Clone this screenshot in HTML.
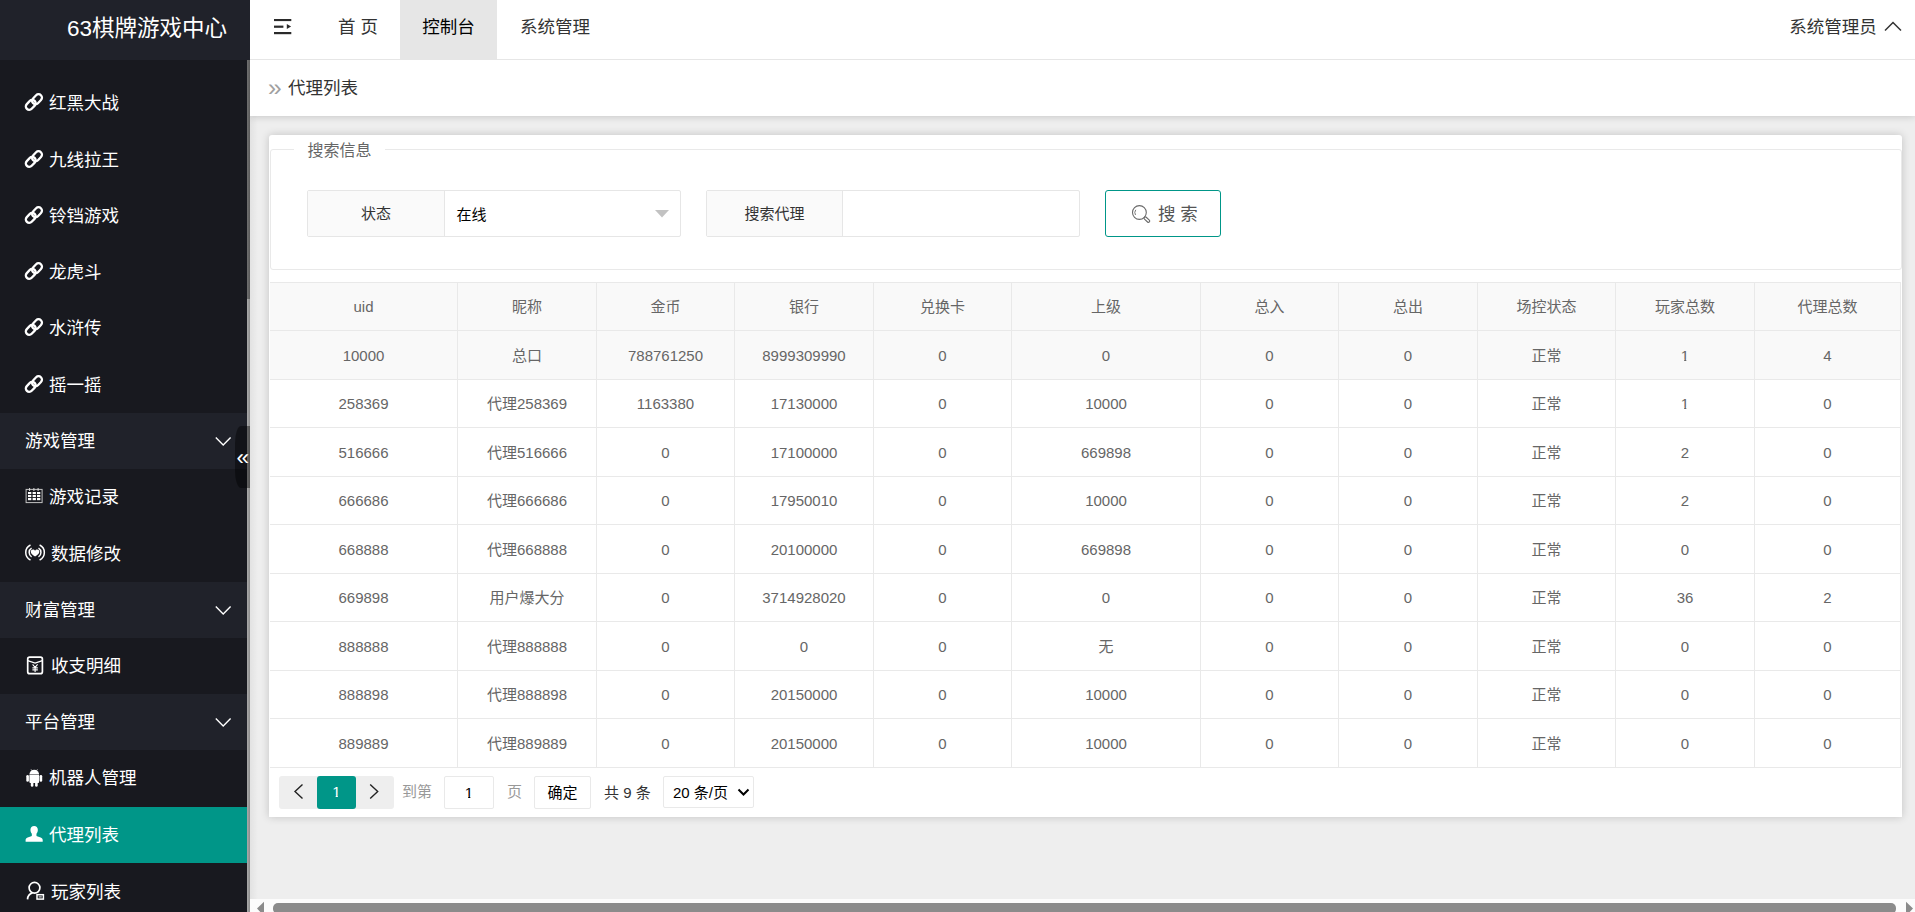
<!DOCTYPE html>
<html lang="zh-CN">
<head>
<meta charset="utf-8">
<title>63棋牌游戏中心</title>
<style>
*{box-sizing:border-box;margin:0;padding:0}
html,body{width:1915px;height:912px;overflow:hidden;background:#eee}
body{font-family:"Liberation Sans","Noto Sans CJK SC",sans-serif;font-size:17.5px;color:#333;position:relative}
#side{z-index:5;position:absolute;left:0;top:0;width:250px;height:912px;background:#18191f;overflow:hidden}
#logo{position:absolute;left:0;top:0;width:250px;height:60px;background:#20222a;color:#fff;font-size:22.5px;line-height:60px;white-space:nowrap}
#logo span{position:absolute;left:67px;top:-1px}
.mi{position:absolute;left:0;width:247px;height:56px;color:#fff;font-size:17.5px;line-height:58px;white-space:nowrap}
.mi .t{position:absolute;left:49px;top:0}
.mi svg{position:absolute;left:0;top:0;width:60px;height:56px}
.grp{background:#20222a}
.lo{line-height:56px !important}
.grp .t{left:25px}
.mi.grp svg.chev{position:absolute;left:214.500px;top:23.500px;width:17px;height:10px}
.act{background:#009688}
#sbar{position:absolute;left:247px;top:60px;width:3px;height:852px;background:linear-gradient(90deg,#aaa,#8c8c8c)}
#sbar i{position:absolute;left:0;top:0;width:3px;height:239px;background:linear-gradient(90deg,#707070,#5a5a5a)}
#handle{position:absolute;left:235px;top:426px;width:15px;height:62px;background:rgba(0,0,0,.42);border-radius:6px 0 0 6px/17px 0 0 17px}
#handle span{position:absolute;left:1.500px;top:0;color:#fff;font-size:22.500px;line-height:63px}
#head{z-index:4;position:absolute;left:250px;top:0;width:1665px;height:60px;background:#fff;border-bottom:1px solid #e6e6e6}
.tab{position:absolute;top:0;height:59px;line-height:55px;font-size:17.5px;color:#333;white-space:nowrap;text-align:center}
#crumb{z-index:3;position:absolute;left:250px;top:60px;width:1665px;height:56px;background:#fff;box-shadow:0 0 8px rgba(0,0,0,.2)}
#crumb .t{position:absolute;left:38px;top:0;line-height:57px;font-size:17.5px;color:#333}
#crumb .g{position:absolute;left:18px;top:0;line-height:56px;font-size:24.5px;color:#a0a0a0}
#card{position:absolute;left:269px;top:135px;width:1633px;height:682px;background:#fff;border-radius:3px 3px 0 0;box-shadow:0 0 8px rgba(0,0,0,.19)}
#fs{position:absolute;left:1px;top:14px;width:1632px;height:121px;border:1px solid #e9e9e9;border-radius:3px}
#lg{position:absolute;left:23px;top:-11.500px;width:91px;height:24px;background:#fff;font-size:16px;line-height:24px;color:#666;text-align:center}
.pane{position:absolute;top:55px;height:47px;border:1px solid #e6e6e6;border-radius:2px;background:#fff}
.pane .lab{position:absolute;left:0;top:0;height:45px;background:#fafafa;border-right:1px solid #e6e6e6;font-size:15px;line-height:45px;text-align:center;color:#333}
.pane .val{position:absolute;top:0;height:45px;font-size:15px;line-height:47px;color:#000}
#btn{position:absolute;left:836px;top:55px;width:116px;height:47px;border:1px solid #009688;border-radius:3px;background:#fff;color:#555;font-size:17.5px;line-height:45px}
#tbl{position:absolute;left:1px;top:147px;width:1631px;height:486px;border-top:1px solid #e9e9e9}
.row{position:absolute;left:0;width:1631px;border-bottom:1px solid #e9e9e9;font-size:15px;color:#666}
.row.hd{background:#f9f9f9}
.row.r1{background:#f9f9f9}
.c{position:absolute;top:0;height:100%;text-align:center;border-right:1px solid #e9e9e9;white-space:nowrap}
.c:last-child{}
.n1{font-weight:400;display:inline-block;line-height:1em;clip-path:polygon(0 0,100% 0,100% 76%,66% 76%,66% 100%,40% 100%,40% 76%,0 76%)}
#pg{position:absolute;left:0;top:641px;font-size:15px;height:33px;line-height:33px;width:800px}
#pg>*{position:absolute;top:0;height:33px;white-space:nowrap}
#ls{position:absolute;left:250px;top:116px;width:8px;height:783px;background:linear-gradient(90deg,rgba(0,0,0,.05),rgba(0,0,0,0));z-index:2}
#hs{z-index:3;position:absolute;left:250px;top:899px;width:1665px;height:13px;background:#fcfcfc;overflow:hidden}
#hs .th{position:absolute;left:23px;top:4px;width:1623px;height:11px;border-radius:5px;background:#8b8b8b}
</style>
</head>
<body>
<div id="side">
<div id="logo"><span>63棋牌游戏中心</span></div>
<div class="mi " style="top:74px"><svg viewBox="0 0 60 56"><g transform="translate(33.9 28.05) rotate(-46)" fill="none" stroke="#fff" stroke-width="2.300"><rect x="-9.800" y="-3.700" width="11.200" height="6.800" rx="3.400"/><rect x="-1.400" y="-3.100" width="11.200" height="6.800" rx="3.400"/></g></svg><span class="t">红黑大战</span></div>
<div class="mi " style="top:131px"><svg viewBox="0 0 60 56"><g transform="translate(33.9 28.05) rotate(-46)" fill="none" stroke="#fff" stroke-width="2.300"><rect x="-9.800" y="-3.700" width="11.200" height="6.800" rx="3.400"/><rect x="-1.400" y="-3.100" width="11.200" height="6.800" rx="3.400"/></g></svg><span class="t">九线拉王</span></div>
<div class="mi " style="top:187px"><svg viewBox="0 0 60 56"><g transform="translate(33.9 28.05) rotate(-46)" fill="none" stroke="#fff" stroke-width="2.300"><rect x="-9.800" y="-3.700" width="11.200" height="6.800" rx="3.400"/><rect x="-1.400" y="-3.100" width="11.200" height="6.800" rx="3.400"/></g></svg><span class="t">铃铛游戏</span></div>
<div class="mi " style="top:243px"><svg viewBox="0 0 60 56"><g transform="translate(33.9 28.05) rotate(-46)" fill="none" stroke="#fff" stroke-width="2.300"><rect x="-9.800" y="-3.700" width="11.200" height="6.800" rx="3.400"/><rect x="-1.400" y="-3.100" width="11.200" height="6.800" rx="3.400"/></g></svg><span class="t">龙虎斗</span></div>
<div class="mi " style="top:299px"><svg viewBox="0 0 60 56"><g transform="translate(33.9 28.05) rotate(-46)" fill="none" stroke="#fff" stroke-width="2.300"><rect x="-9.800" y="-3.700" width="11.200" height="6.800" rx="3.400"/><rect x="-1.400" y="-3.100" width="11.200" height="6.800" rx="3.400"/></g></svg><span class="t">水浒传</span></div>
<div class="mi " style="top:356px"><svg viewBox="0 0 60 56"><g transform="translate(33.9 28.05) rotate(-46)" fill="none" stroke="#fff" stroke-width="2.300"><rect x="-9.800" y="-3.700" width="11.200" height="6.800" rx="3.400"/><rect x="-1.400" y="-3.100" width="11.200" height="6.800" rx="3.400"/></g></svg><span class="t">摇一摇</span></div>
<div class="mi grp lo" style="top:413px"><span class="t">游戏管理</span><svg class="chev" viewBox="0 0 17 10"><path d="M.8 .6l7.400 7.300L15.600 .6" fill="none" stroke="#fff" stroke-width="1.400"/></svg></div>
<div class="mi lo" style="top:469px"><svg style="top:-1px" viewBox="0 0 60 56"><rect x="26.100" y="21.400" width="16" height="13.200" fill="none" stroke="#c4c4c4" stroke-width="1"/><path d="M29.600 20v3M33.900 20v3M38.100 20v3" stroke="#ddd" stroke-width="1"/><g fill="#fff"><rect x="28" y="24" width="3.300" height="2.100"/><rect x="32.600" y="24" width="3.300" height="2.100"/><rect x="37" y="24" width="3.300" height="2.100"/><rect x="28" y="27" width="3.300" height="2.100"/><rect x="32.600" y="27" width="3.300" height="2.100"/><rect x="37" y="27" width="3.300" height="2.100"/><rect x="28" y="30" width="3.300" height="2.200"/><rect x="32.600" y="30" width="3.300" height="2.200"/><rect x="37" y="30" width="3.300" height="2.200"/></g></svg><span class="t">游戏记录</span></div>
<div class="mi lo" style="top:526px"><svg style="top:-1px" viewBox="0 0 60 56"><path d="M35.050 31.600c-3-2.100-4.250-3.300-4.250-4.900 0-1.300 1-2.200 2.150-2.200.9 0 1.700.5 2.100 1.300.4-.8 1.200-1.300 2.100-1.300 1.150 0 2.150.9 2.150 2.200 0 1.600-1.250 2.800-4.250 4.900z" fill="#fff"/><g fill="none" stroke="#fff" stroke-width="1.500"><path d="M31.600 23.200a5 5 0 0 0 0 8.600M38.500 23.200a5 5 0 0 1 0 8.600M30.500 20a8.300 8.300 0 0 0 0 15M39.600 20a8.300 8.300 0 0 1 0 15"/></g></svg><span class="t" style="left:51px">数据修改</span></div>
<div class="mi grp lo" style="top:582px"><span class="t">财富管理</span><svg class="chev" viewBox="0 0 17 10"><path d="M.8 .6l7.400 7.300L15.600 .6" fill="none" stroke="#fff" stroke-width="1.400"/></svg></div>
<div class="mi lo" style="top:638px"><svg style="top:-1px" viewBox="0 0 60 56"><g fill="none" stroke="#fff"><rect x="27.700" y="20.200" width="14.700" height="16.500" rx="2" stroke-width="1.700"/><path d="M27.700 23.700l7.400 2.400 7.300-2.400" stroke-width="1.400"/><path d="M32.600 27.300l2.500 3 2.500-3M35.100 30.300v4.600M32.400 30.900h5.400M32.400 32.900h5.400" stroke-width="1.100"/></g></svg><span class="t" style="left:51px">收支明细</span></div>
<div class="mi grp lo" style="top:694px"><span class="t">平台管理</span><svg class="chev" viewBox="0 0 17 10"><path d="M.8 .6l7.400 7.300L15.600 .6" fill="none" stroke="#fff" stroke-width="1.400"/></svg></div>
<div class="mi lo" style="top:750px"><svg style="top:-1px" viewBox="0 0 60 56"><g fill="#fff"><path d="M29.400 25.900h9.700v7.100a1 1 0 0 1-1 1h-7.700a1 1 0 0 1-1-1z"/><path d="M29.400 25.500a4.850 4.700 0 0 1 9.700 0z"/><rect x="26.300" y="26" width="2.600" height="6.700" rx="1.300"/><rect x="39.600" y="26" width="2.600" height="6.700" rx="1.300"/><rect x="30.800" y="32" width="2.600" height="5.700" rx="1.300"/><rect x="35.100" y="32" width="2.600" height="5.700" rx="1.300"/></g><path d="M31 20.200l1 1.800M37.500 20.200l-1 1.800" stroke="#fff" stroke-width=".6"/></svg><span class="t">机器人管理</span></div>
<div class="mi act lo" style="top:807px"><svg style="top:-1px" viewBox="0 0 60 56"><path d="M34.150 19.900c2.200 0 3.700 1.600 3.700 3.900 0 1.600-.6 3.100-1.400 4v1.700c0 .4.200.6.600.8l3.600 1.300c1.300.5 2.050 1.300 2.050 2.500v1.700H25.600v-1.700c0-1.200.75-2 2.050-2.500l3.600-1.300c.4-.2.600-.4.600-.8v-1.700c-.8-.9-1.400-2.400-1.400-4 0-2.300 1.500-3.900 3.700-3.900z" fill="#fff"/></svg><span class="t">代理列表</span></div>
<div class="mi " style="top:863px"><svg viewBox="0 0 60 56"><g fill="none" stroke="#fff" stroke-width="1.700"><circle cx="34.500" cy="24.800" r="5.400"/><path d="M27.500 36.300c.3-3.300 2.200-5.600 5-6.400"/><rect x="37" y="31.700" width="6.400" height="4.400" stroke-width="1.500"/></g><rect x="38.600" y="33.200" width="3.200" height="1.400" fill="#bbb"/></svg><span class="t" style="left:51px">玩家列表</span></div>
<div id="sbar"><i></i></div>
<div id="handle"><span>«</span></div>
</div>
<div id="head">
<svg style="position:absolute;left:0;top:0;width:60px;height:59px" viewBox="0 0 60 59"><g fill="#2a2a2a"><rect x="24" y="19" width="17.300" height="2.100"/><rect x="24" y="25.600" width="9.400" height="2.200"/><rect x="24" y="32" width="17.300" height="2.200"/><path d="M36.800 24v5l4.300-2.500z"/></g></svg>
<div class="tab" style="left:66px;width:84px">首 页</div>
<div class="tab" style="left:150px;width:97px;background:#e6e6e6;color:#000">控制台</div>
<div class="tab" style="left:247px;width:116px">系统管理</div>
<div class="tab" style="left:1539px;width:88px">系统管理员</div>
<svg style="position:absolute;left:1634px;top:21px;width:18px;height:11px" viewBox="0 0 18 11"><path d="M1 9.500l8-8 8 8" fill="none" stroke="#333" stroke-width="1.500"/></svg>
</div>
<div id="crumb"><span class="g">»</span><span class="t">代理列表</span></div>
<div id="ls"></div>
<div id="card">
<div id="fs"><div id="lg">搜索信息</div></div>
<div class="pane" style="left:38px;width:374px"><div class="lab" style="width:137px">状态</div><div class="val" style="left:148.500px">在线</div><svg style="position:absolute;left:347px;top:19px;width:14px;height:8px" viewBox="0 0 14 8"><path d="M0 0h14L7 7.500z" fill="#c2c2c2"/></svg></div>
<div class="pane" style="left:437px;width:374px"><div class="lab" style="width:136px">搜索代理</div></div>
<div id="btn"><svg style="position:absolute;left:20px;top:8px;width:30px;height:30px" viewBox="0 0 30 30"><g fill="none" stroke="#6a6a6a" stroke-width="1.100"><circle cx="13.400" cy="13.500" r="6.900"/><rect x="-1.300" y="0" width="2.600" height="6.800" rx="1.300" transform="translate(18.400 18.300) rotate(-47)"/><path d="M9.500 16a4.600 4.600 0 0 1 .3-5.200" stroke-width=".9"/></g></svg><span style="position:absolute;left:52px;top:.500px">搜 索</span></div>
<div id="tbl"><div class="row hd" style="top:0px;height:48px;line-height:47px"><div class="c" style="left:0px;width:188px">uid</div><div class="c" style="left:188px;width:139px">昵称</div><div class="c" style="left:327px;width:138px">金币</div><div class="c" style="left:465px;width:139px">银行</div><div class="c" style="left:604px;width:138px">兑换卡</div><div class="c" style="left:742px;width:189px">上级</div><div class="c" style="left:931px;width:138px">总入</div><div class="c" style="left:1069px;width:139px">总出</div><div class="c" style="left:1208px;width:138px">场控状态</div><div class="c" style="left:1346px;width:139px">玩家总数</div><div class="c" style="left:1485px;width:146px">代理总数</div></div><div class="row r1" style="top:48px;height:49px;line-height:50px"><div class="c" style="left:0px;width:188px">10000</div><div class="c" style="left:188px;width:139px">总口</div><div class="c" style="left:327px;width:138px">788761250</div><div class="c" style="left:465px;width:139px">8999309990</div><div class="c" style="left:604px;width:138px">0</div><div class="c" style="left:742px;width:189px">0</div><div class="c" style="left:931px;width:138px">0</div><div class="c" style="left:1069px;width:139px">0</div><div class="c" style="left:1208px;width:138px">正常</div><div class="c" style="left:1346px;width:139px"><b class="n1">1</b></div><div class="c" style="left:1485px;width:146px">4</div></div><div class="row" style="top:97px;height:48px;line-height:47px"><div class="c" style="left:0px;width:188px">258369</div><div class="c" style="left:188px;width:139px">代理258369</div><div class="c" style="left:327px;width:138px">1163380</div><div class="c" style="left:465px;width:139px">17130000</div><div class="c" style="left:604px;width:138px">0</div><div class="c" style="left:742px;width:189px">10000</div><div class="c" style="left:931px;width:138px">0</div><div class="c" style="left:1069px;width:139px">0</div><div class="c" style="left:1208px;width:138px">正常</div><div class="c" style="left:1346px;width:139px"><b class="n1">1</b></div><div class="c" style="left:1485px;width:146px">0</div></div><div class="row" style="top:145px;height:49px;line-height:50px"><div class="c" style="left:0px;width:188px">516666</div><div class="c" style="left:188px;width:139px">代理516666</div><div class="c" style="left:327px;width:138px">0</div><div class="c" style="left:465px;width:139px">17100000</div><div class="c" style="left:604px;width:138px">0</div><div class="c" style="left:742px;width:189px">669898</div><div class="c" style="left:931px;width:138px">0</div><div class="c" style="left:1069px;width:139px">0</div><div class="c" style="left:1208px;width:138px">正常</div><div class="c" style="left:1346px;width:139px">2</div><div class="c" style="left:1485px;width:146px">0</div></div><div class="row" style="top:194px;height:48px;line-height:47px"><div class="c" style="left:0px;width:188px">666686</div><div class="c" style="left:188px;width:139px">代理666686</div><div class="c" style="left:327px;width:138px">0</div><div class="c" style="left:465px;width:139px">17950010</div><div class="c" style="left:604px;width:138px">0</div><div class="c" style="left:742px;width:189px">10000</div><div class="c" style="left:931px;width:138px">0</div><div class="c" style="left:1069px;width:139px">0</div><div class="c" style="left:1208px;width:138px">正常</div><div class="c" style="left:1346px;width:139px">2</div><div class="c" style="left:1485px;width:146px">0</div></div><div class="row" style="top:242px;height:49px;line-height:50px"><div class="c" style="left:0px;width:188px">668888</div><div class="c" style="left:188px;width:139px">代理668888</div><div class="c" style="left:327px;width:138px">0</div><div class="c" style="left:465px;width:139px">20100000</div><div class="c" style="left:604px;width:138px">0</div><div class="c" style="left:742px;width:189px">669898</div><div class="c" style="left:931px;width:138px">0</div><div class="c" style="left:1069px;width:139px">0</div><div class="c" style="left:1208px;width:138px">正常</div><div class="c" style="left:1346px;width:139px">0</div><div class="c" style="left:1485px;width:146px">0</div></div><div class="row" style="top:291px;height:48px;line-height:47px"><div class="c" style="left:0px;width:188px">669898</div><div class="c" style="left:188px;width:139px">用户爆大分</div><div class="c" style="left:327px;width:138px">0</div><div class="c" style="left:465px;width:139px">3714928020</div><div class="c" style="left:604px;width:138px">0</div><div class="c" style="left:742px;width:189px">0</div><div class="c" style="left:931px;width:138px">0</div><div class="c" style="left:1069px;width:139px">0</div><div class="c" style="left:1208px;width:138px">正常</div><div class="c" style="left:1346px;width:139px">36</div><div class="c" style="left:1485px;width:146px">2</div></div><div class="row" style="top:339px;height:49px;line-height:50px"><div class="c" style="left:0px;width:188px">888888</div><div class="c" style="left:188px;width:139px">代理888888</div><div class="c" style="left:327px;width:138px">0</div><div class="c" style="left:465px;width:139px">0</div><div class="c" style="left:604px;width:138px">0</div><div class="c" style="left:742px;width:189px">无</div><div class="c" style="left:931px;width:138px">0</div><div class="c" style="left:1069px;width:139px">0</div><div class="c" style="left:1208px;width:138px">正常</div><div class="c" style="left:1346px;width:139px">0</div><div class="c" style="left:1485px;width:146px">0</div></div><div class="row" style="top:388px;height:48px;line-height:47px"><div class="c" style="left:0px;width:188px">888898</div><div class="c" style="left:188px;width:139px">代理888898</div><div class="c" style="left:327px;width:138px">0</div><div class="c" style="left:465px;width:139px">20150000</div><div class="c" style="left:604px;width:138px">0</div><div class="c" style="left:742px;width:189px">10000</div><div class="c" style="left:931px;width:138px">0</div><div class="c" style="left:1069px;width:139px">0</div><div class="c" style="left:1208px;width:138px">正常</div><div class="c" style="left:1346px;width:139px">0</div><div class="c" style="left:1485px;width:146px">0</div></div><div class="row" style="top:436px;height:49px;line-height:50px"><div class="c" style="left:0px;width:188px">889889</div><div class="c" style="left:188px;width:139px">代理889889</div><div class="c" style="left:327px;width:138px">0</div><div class="c" style="left:465px;width:139px">20150000</div><div class="c" style="left:604px;width:138px">0</div><div class="c" style="left:742px;width:189px">10000</div><div class="c" style="left:931px;width:138px">0</div><div class="c" style="left:1069px;width:139px">0</div><div class="c" style="left:1208px;width:138px">正常</div><div class="c" style="left:1346px;width:139px">0</div><div class="c" style="left:1485px;width:146px">0</div></div></div>
<div id="pg"><div style="left:10px;width:115px;background:#eee;border-radius:3px"></div><svg style="left:20px;top:0;width:20px;height:33px" viewBox="0 0 20 33"><path d="M13.500 8.400L6 15.500l7.500 7.100" fill="none" stroke="#222" stroke-width="1.400"/></svg><div style="left:48px;width:39px;background:#009688;color:#fff;text-align:center;border-radius:3px;line-height:31px"><b class="n1">1</b></div><svg style="left:95px;top:0;width:20px;height:33px" viewBox="0 0 20 33"><path d="M6.200 8.400l7.500 7.100-7.500 7.100" fill="none" stroke="#222" stroke-width="1.400"/></svg><div style="left:133px;color:#999;line-height:31px">到第</div><div style="left:175px;width:50px;border:1px solid #e9e9e9;border-radius:2px;text-align:center;color:#000;line-height:31px"><b class="n1">1</b></div><div style="left:238px;color:#999;line-height:31px">页</div><div style="left:265px;width:57px;border:1px solid #e9e9e9;border-radius:2px;text-align:center;color:#000;line-height:32px">确定</div><div style="left:335px;color:#333">共 9 条</div><div style="left:394px;width:91px;height:32px;border:1px solid #e9e9e9;border-radius:2px;color:#000;line-height:31px"><span style="position:absolute;left:9px;top:0">20 条/页</span><svg style="position:absolute;left:72.500px;top:11px;width:13px;height:9px" viewBox="0 0 13 9"><path d="M1.500 1.500l5 5 5-5" fill="none" stroke="#000" stroke-width="2"/></svg></div></div>
</div>
<div id="hs"><svg style="position:absolute;left:0;top:0;width:20px;height:13px" viewBox="0 0 20 13"><path d="M14 2.800v14L7 9.600z" fill="#8b8b8b"/></svg><div class="th"></div><svg style="position:absolute;left:1645px;top:0;width:20px;height:13px" viewBox="0 0 20 13"><path d="M11 2.800v14l7-7.200z" fill="#8b8b8b"/></svg></div>
</body>
</html>
